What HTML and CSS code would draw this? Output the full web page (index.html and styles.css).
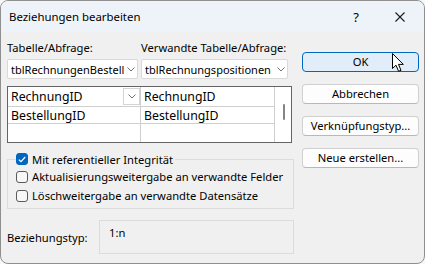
FILE: index.html
```html
<!DOCTYPE html>
<html lang="de">
<head>
<meta charset="utf-8">
<title>Beziehungen bearbeiten</title>
<link rel="stylesheet" href="styles.css">
</head>
<body>
<div class="window">
  <div class="titlebar">
    <span class="title">Beziehungen bearbeiten</span>
    <span class="help">?</span>
    <span class="close">
      <svg width="10" height="10" viewBox="0 0 10 10"><path d="M0.5 0.5 L9.5 9.5 M9.5 0.5 L0.5 9.5" stroke="#1a1a1a" stroke-width="1.1" fill="none"/></svg>
    </span>
  </div>
  <div class="content">
    <div class="left">
      <div class="pair labels">
        <span>Tabelle/Abfrage:</span>
        <span>Verwandte Tabelle/Abfrage:</span>
      </div>
      <div class="pair combos">
        <div class="combo"><span class="ctext">tblRechnungenBestell</span><svg class="chev" width="8" height="5" viewBox="0 0 8 5"><path d="M0.5 0.5 L4 4 L7.5 0.5" stroke="#707070" stroke-width="1" fill="none"/></svg></div>
        <div class="combo"><span class="ctext">tblRechnungspositionen</span><svg class="chev" width="8" height="5" viewBox="0 0 8 5"><path d="M0.5 0.5 L4 4 L7.5 0.5" stroke="#707070" stroke-width="1" fill="none"/></svg></div>
      </div>
      <div class="table">
        <div class="cells">
          <div class="cell r1 c1"><span>RechnungID</span><span class="cellbtn"><svg width="8" height="5" viewBox="0 0 8 5"><path d="M0.5 0.5 L4 4 L7.5 0.5" stroke="#707070" stroke-width="1" fill="none"/></svg></span></div>
          <div class="cell r1 c2">RechnungID</div>
          <div class="cell r2 c1">BestellungID</div>
          <div class="cell r2 c2">BestellungID</div>
          <div class="cell r3 c1"></div>
          <div class="cell r3 c2"></div>
        </div>
        <div class="scroll"><span class="thumb"></span></div>
      </div>
      <fieldset class="group">
        <legend class="chk"><span class="box checked"><svg width="8" height="7" viewBox="0 0 8 7"><path d="M0.8 3.6 L3 5.7 L7.2 1" stroke="#fff" stroke-width="1.2" fill="none"/></svg></span>Mit referentieller Integrität</legend>
        <div class="chk row"><span class="box"></span>Aktualisierungsweitergabe an verwandte Felder</div>
        <div class="chk row"><span class="box"></span>Löschweitergabe an verwandte Datensätze</div>
      </fieldset>
      <div class="typerow">
        <span class="typelabel">Beziehungstyp:</span>
        <div class="typebox">1:n</div>
      </div>
    </div>
    <div class="right">
      <button class="btn default">OK</button>
      <button class="btn">Abbrechen</button>
      <button class="btn">Verknüpfungstyp...</button>
      <button class="btn">Neue erstellen...</button>
    </div>
  </div>
  <svg class="cursor" width="13" height="20" viewBox="0 0 13 20"><path d="M0.5 0.5 L0.5 15.5 L4 12.2 L6.6 18.3 L9 17.3 L6.5 11.4 L11.3 11.4 Z" fill="#fff" stroke="#000" stroke-width="1" stroke-linejoin="round"/></svg>
</div>
</body>
</html>
```
FILE: styles.css
```css
html, body {
  margin: 0;
  padding: 0;
  background: #f7f7f7;
}
body {
  font-family: "Noto Sans", "Open Sans", sans-serif;
  font-size: 11.2px;
  color: #000;
}
.window {
  position: relative;
  width: 425px;
  height: 264px;
  box-sizing: border-box;
  border: 1px solid #8f8f8f;
  border-radius: 8px;
  background: #f0f0f0;
  overflow: hidden;
}
.titlebar {
  height: 31px;
  background: #eef3f9;
  display: flex;
  align-items: center;
  padding-left: 8px;
}
.title {
  flex: 1;
  font-size: 11.4px;
  color: #000;
}
.help {
  width: 20px;
  font-size: 13px;
  text-align: center;
  margin-right: 29px;
}
.close {
  width: 29px;
  display: flex;
  justify-content: flex-start;
  padding-top: 1px;
}
.content {
  display: flex;
  padding: 8px 0 0 6px;
}
.left {
  width: 287px;
}
.pair {
  display: grid;
  grid-template-columns: 131px 147px;
  column-gap: 3px;
}
.labels {
  line-height: 16px;
  white-space: nowrap;
}
.combos {
  margin-top: 3px;
}
.combo {
  height: 20px;
  box-sizing: border-box;
  background: #fff;
  border: 1px solid #d9d9d9;
  border-radius: 2px;
  display: flex;
  align-items: center;
  padding-left: 3px;
  overflow: hidden;
  font-size: 11px;
}
.ctext {
  flex: 1;
  white-space: nowrap;
  overflow: hidden;
}
.chev {
  flex: none;
  margin: 0 2px 0 2px;
}
.table {
  margin-top: 7px;
  width: 285px;
  height: 57px;
  box-sizing: border-box;
  border: 1px solid #646464;
  background: #fff;
  display: flex;
  font-size: 12.3px;
}
.cells {
  display: grid;
  grid-template-columns: 133px 134px;
  grid-template-rows: 20px 17px 18px;
}
.cell {
  box-sizing: border-box;
  border-right: 1px solid #cfcfcf;
  padding-left: 3px;
  display: flex;
  align-items: center;
  white-space: nowrap;
}
.r1, .r2 {
  border-bottom: 1px solid #cfcfcf;
}
.cell.r1 {
  padding-bottom: 1px;
}
.cellbtn {
  margin-left: auto;
  width: 17px;
  height: 17px;
  box-sizing: border-box;
  border: 1px solid #d4d4d4;
  background: #fff;
  display: flex;
  align-items: center;
  justify-content: center;
  margin-top: 1px;
}
.scroll {
  width: 16px;
  display: flex;
  justify-content: center;
  padding-left: 1px;
}
.thumb {
  width: 2px;
  height: 16px;
  margin-top: 17px;
  background: #858585;
  border-radius: 1px;
}
.group {
  margin: 8px 0 0 0;
  width: 287px;
  box-sizing: border-box;
  border: 1px solid #dcdcdc;
  padding: 0 0 3px 8px;
  min-width: 0;
}
.chk {
  display: flex;
  align-items: center;
  white-space: nowrap;
}
legend.chk {
  padding: 0 2px 0 0;
  height: 16px;
}
.row {
  height: 19px;
}
.box {
  flex: none;
  width: 12px;
  height: 12px;
  box-sizing: border-box;
  border: 1px solid #5a5a5a;
  border-radius: 3px;
  background: #f7f7f7;
  margin-right: 4px;
  display: flex;
  align-items: center;
  justify-content: center;
}
.box.checked {
  background: #0067c0;
  border-color: #0067c0;
}
.typerow {
  margin-top: 11px;
  display: flex;
  align-items: flex-start;
}
.typelabel {
  width: 92px;
  margin-top: 10px;
  line-height: 16px;
}
.typebox {
  width: 195px;
  height: 34px;
  box-sizing: border-box;
  border: 1px solid #dcdcdc;
  padding: 4px 0 0 9px;
  line-height: 16px;
}
.right {
  margin-left: 8px;
  width: 117px;
  padding-top: 12px;
  display: flex;
  flex-direction: column;
  gap: 12px;
}
.btn {
  height: 20px;
  box-sizing: border-box;
  border: 1px solid #d0d0d0;
  border-bottom-color: #b8b8b8;
  border-radius: 4px;
  background: #fdfdfd;
  font-family: inherit;
  font-size: 11.2px;
  color: #000;
  padding: 0;
  line-height: 16px;
}
.btn.default {
  background: #e1edf8;
  border: 1px solid #0067c0;
}
.cursor {
  position: absolute;
  left: 391px;
  top: 52px;
}
```
